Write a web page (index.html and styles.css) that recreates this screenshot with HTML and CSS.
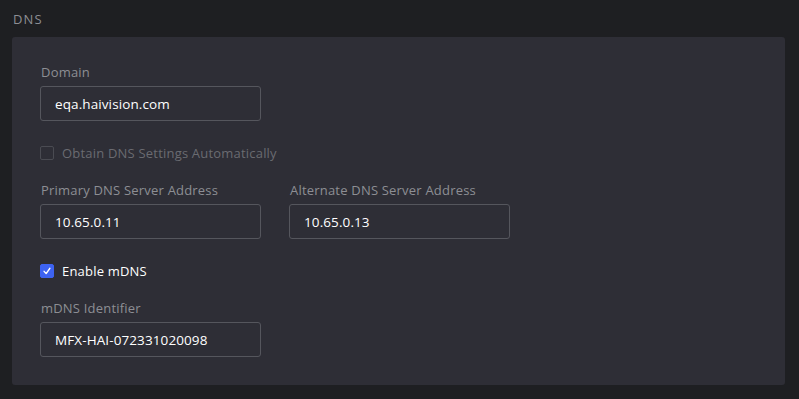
FILE: index.html
```html
<!DOCTYPE html>
<html lang="en">
<head>
    <meta charset="UTF-8">
    <meta name="viewport" content="width=device-width, initial-scale=1.0">
    <title>DNS</title>
    <link rel="stylesheet" href="styles.css">
</head>
<body>
    <section class="section">
        <h2 class="section-title">DNS</h2>

        <div class="card">
            <div class="form-group">
                <label for="domain">Domain</label>
                <input type="text" id="domain" value="eqa.haivision.com">
            </div>

            <div class="check-row disabled">
                <span class="checkbox"></span>
                <span>Obtain DNS Settings Automatically</span>
            </div>

            <div class="form-row">
                <div class="form-group">
                    <label for="primary">Primary DNS Server Address</label>
                    <input type="text" id="primary" value="10.65.0.11">
                </div>
                <div class="form-group">
                    <label for="alternate">Alternate DNS Server Address</label>
                    <input type="text" id="alternate" value="10.65.0.13">
                </div>
            </div>

            <div class="check-row">
                <span class="checkbox checked">
                    <svg viewBox="0 0 14 14" width="14" height="14"><path d="M3.6 7.4 L6 10 L10.4 3.8" fill="none" stroke="#fff" stroke-width="1.6" stroke-linecap="round" stroke-linejoin="round"/></svg>
                </span>
                <span>Enable mDNS</span>
            </div>

            <div class="form-group">
                <label for="mdns">mDNS Identifier</label>
                <input type="text" id="mdns" value="MFX-HAI-072331020098">
            </div>
        </div>
    </section>
</body>
</html>
```

FILE: styles.css
```css
:root {
    --page-bg: #1e1f22;
    --card-bg: #2e2e36;
    --border-color: #55565d;
    --label-color: #8d8e94;
    --muted-color: #6a6b71;
    --text-color: #ffffff;
    --accent-color: #3d63f2;
}

* {
    margin: 0;
    padding: 0;
    box-sizing: border-box;
}

body {
    font-family: 'Open Sans', 'Liberation Sans', sans-serif;
    background-color: var(--page-bg);
    color: var(--text-color);
    width: 799px;
    height: 399px;
    overflow: hidden;
}

.section {
    padding: 10px 14px 0 12px;
}

.section-title {
    font-size: 13px;
    font-weight: 500;
    letter-spacing: 1.1px;
    color: var(--label-color);
    line-height: 18px;
    margin-bottom: 9px;
    padding-left: 1px;
}

.card {
    background-color: var(--card-bg);
    border-radius: 3px;
    padding: 27px 28px 28px;
    display: flex;
    flex-direction: column;
}

.form-row {
    display: flex;
    gap: 28px;
}

.form-group {
    display: flex;
    flex-direction: column;
}

label {
    font-size: 13px;
    line-height: 16px;
    letter-spacing: 0.2px;
    color: var(--label-color);
    margin-bottom: 6px;
    padding-left: 1px;
}

input {
    width: 221px;
    height: 35px;
    padding: 0 14px;
    background-color: transparent;
    border: 1px solid var(--border-color);
    border-radius: 3px;
    font-family: inherit;
    font-size: 13.5px;
    font-weight: 500;
    letter-spacing: 0.1px;
    color: var(--text-color);
    outline: none;
}

.check-row {
    display: flex;
    align-items: center;
    gap: 8px;
    height: 20px;
    margin: 22px 0 19px;
    font-size: 13px;
    letter-spacing: 0.2px;
    color: var(--text-color);
}

.check-row.disabled {
    color: var(--muted-color);
}

.checkbox {
    width: 14px;
    height: 14px;
    border: 1px solid #4a4b52;
    border-radius: 2px;
    display: flex;
    align-items: center;
    justify-content: center;
}

.checkbox.checked {
    background-color: var(--accent-color);
    border-color: var(--accent-color);
}
```
